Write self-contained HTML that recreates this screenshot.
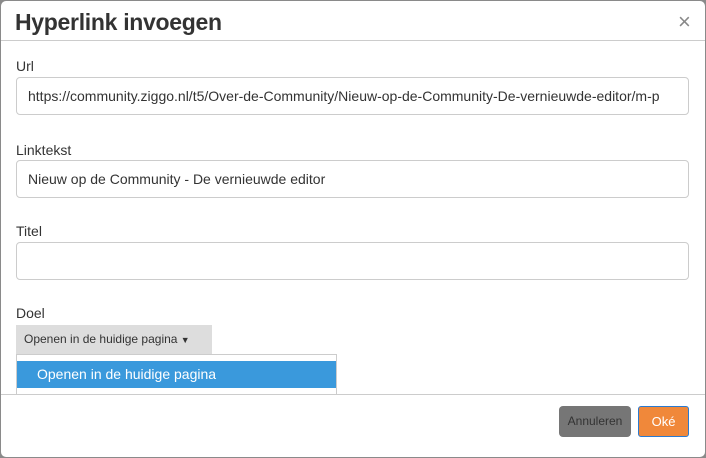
<!DOCTYPE html>
<html><head><style>
body{margin:0;width:706px;height:458px;background:#8a8a8a;font-family:"Liberation Sans",Arial,sans-serif;position:relative;overflow:hidden}
.dlg{position:absolute;left:1px;top:1px;width:704px;height:456px;background:#fff;border-radius:5px}
.abs{position:absolute}
.t{left:14px;top:8px;font-size:23px;font-weight:bold;color:#333;letter-spacing:-0.3px}
.x{left:677px;top:8px;font-size:22px;color:#888}
.hl{left:0;top:39px;width:704px;height:1px;background:#ccc}
.lbl{left:15px;font-size:14px;color:#333}
.in{left:15px;border:1px solid #ccc;border-radius:4px;font-size:14px;color:#333;line-height:36px;padding-left:11px;box-sizing:border-box;width:673px;height:38px;white-space:nowrap;overflow:hidden}
</style></head><body><div class="dlg">
<div class="abs t">Hyperlink invoegen</div>
<div class="abs x">×</div>
<div class="abs hl"></div>
<div class="abs lbl" style="top:57px">Url</div>
<div class="abs in" style="top:76px">https://community.ziggo.nl/t5/Over-de-Community/Nieuw-op-de-Community-De-vernieuwde-editor/m-p</div>
<div class="abs lbl" style="top:141px">Linktekst</div>
<div class="abs in" style="top:159px">Nieuw op de Community - De vernieuwde editor</div>
<div class="abs lbl" style="top:222px">Titel</div>
<div class="abs in" style="top:241px"></div>
<div class="abs lbl" style="top:304px">Doel</div>
<div class="abs" style="left:15px;top:324px;width:196px;height:29px;background:#ddd;font-size:12px;color:#333;line-height:29px;padding-left:8px;box-sizing:border-box">Openen in de huidige pagina <span style="font-size:9px">▼</span></div>
<div class="abs" style="left:15px;top:353px;width:321px;height:41px;border:1px solid #ccc;border-bottom:none;box-sizing:border-box;background:#fff"></div>
<div class="abs" style="left:16px;top:360px;width:319px;height:27px;background:#3a99dc;color:#fff;font-size:14px;line-height:27px;padding-left:20px;box-sizing:border-box">Openen in de huidige pagina</div>
<div class="abs" style="left:0;top:393px;width:704px;height:1px;background:#ccc"></div>
<div class="abs" style="left:558px;top:405px;width:72px;height:31px;background:#767676;border-radius:4px;color:#333;font-size:12px;line-height:31px;text-align:center">Annuleren</div>
<div class="abs" style="left:637px;top:405px;width:51px;height:31px;background:#f0883a;border:1px solid #2a7ad0;box-sizing:border-box;border-radius:3px;color:#fff;font-size:13px;line-height:29px;text-align:center">Oké</div>
</div></body></html>
